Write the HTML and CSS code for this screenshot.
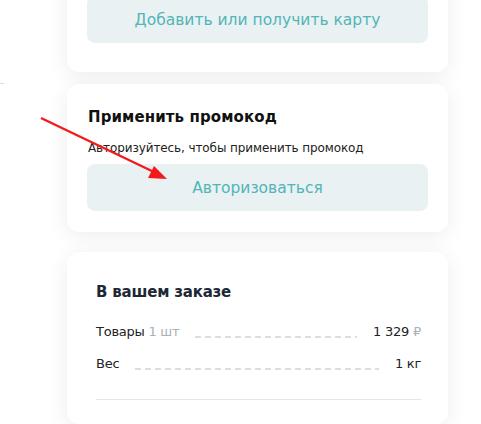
FILE: index.html
```html
<!DOCTYPE html>
<html lang="ru">
<head>
    <meta charset="UTF-8">
    <meta name="viewport" content="width=device-width, initial-scale=1.0">
    <title>Корзина</title>
    <link rel="stylesheet" href="styles.css">
</head>
<body>
    <div class="edge-mark"></div>
    <div class="column">
        <div class="card card-loyalty">
            <button class="soft-btn" type="button">Добавить или получить карту</button>
        </div>

        <div class="card card-promo">
            <h2 class="card-title">Применить промокод</h2>
            <p class="hint">Авторизуйтесь, чтобы применить промокод</p>
            <button class="soft-btn" type="button">Авторизоваться</button>
        </div>

        <div class="card card-order">
            <h2 class="order-title">В вашем заказе</h2>
            <div class="row">
                <span class="label">Товары <span class="muted">1 шт</span></span>
                <span class="dots"></span>
                <span class="value">1 329 <span class="muted">₽</span></span>
            </div>
            <div class="row">
                <span class="label">Вес</span>
                <span class="dots"></span>
                <span class="value">1 кг</span>
            </div>
            <hr class="divider">
        </div>
    </div>

    <!-- annotation arrow drawn over the page -->
    <svg class="arrow" width="481" height="424" viewBox="0 0 481 424">
        <line x1="41" y1="118" x2="156" y2="173" stroke="#f21b1b" stroke-width="2.4"/>
        <polygon points="167,179 148,178 154,166" fill="#f21b1b"/>
    </svg>
</body>
</html>
```

FILE: styles.css
```css
body {
    margin: 0;
    background-color: #ffffff;
    font-family: "DejaVu Sans", "Noto Sans", sans-serif;
    color: #111;
    overflow: hidden;
}
.column {
    width: 381px;
    margin: -24px 0 0 67px;
    display: flex;
    flex-direction: column;
    gap: 12px;
}
.card {
    background: white;
    border-radius: 12px;
    box-shadow: 0 4px 22px rgba(0, 0, 0, 0.075);
    padding: 20px;
}
.card-loyalty {
    padding-bottom: 29px;
}
.soft-btn {
    display: block;
    width: 100%;
    height: 47px;
    border: none;
    border-radius: 8px;
    background-color: #e9f1f3;
    color: #52b5b7;
    font-family: inherit;
    font-size: 15.5px;
    cursor: pointer;
}
.card-promo {
    padding-top: 22px;
    padding-bottom: 21px;
}
.card-title {
    margin: 0 0 0 1px;
    font-size: 15px;
    font-weight: bold;
    letter-spacing: 0.1px;
    line-height: 22px;
}
.hint {
    margin: 12px 0 8px 1px;
    font-size: 12px;
    letter-spacing: -0.1px;
    line-height: 16px;
    color: #222;
}
.card-order {
    margin-top: 8px;
    padding: 29px 27px 24px 29px;
}
.order-title {
    margin: 0 0 13px;
    font-size: 15px;
    font-weight: bold;
    letter-spacing: -0.2px;
    line-height: 22px;
    color: #1d2736;
}
.row {
    display: flex;
    align-items: flex-end;
    height: 32px;
    font-size: 13px;
    letter-spacing: -0.25px;
    color: #222;
}
.row .label, .row .value {
    line-height: 24px;
    padding-bottom: 4px;
}
.muted {
    color: #a9b0b9;
}
.dots {
    flex: 1;
    height: 2px;
    margin: 0 16px 10px;
    background-image: repeating-linear-gradient(90deg, #dadee4 0 6px, transparent 6px 10px);
}
.divider {
    margin: 19px 0 0;
    border: none;
    border-top: 1px solid #e3e6ec;
}
.edge-mark {
    position: absolute;
    left: 0;
    top: 83px;
    width: 4px;
    height: 1px;
    background: #ddd;
}
.arrow {
    position: absolute;
    left: 0;
    top: 0;
    pointer-events: none;
}
```
